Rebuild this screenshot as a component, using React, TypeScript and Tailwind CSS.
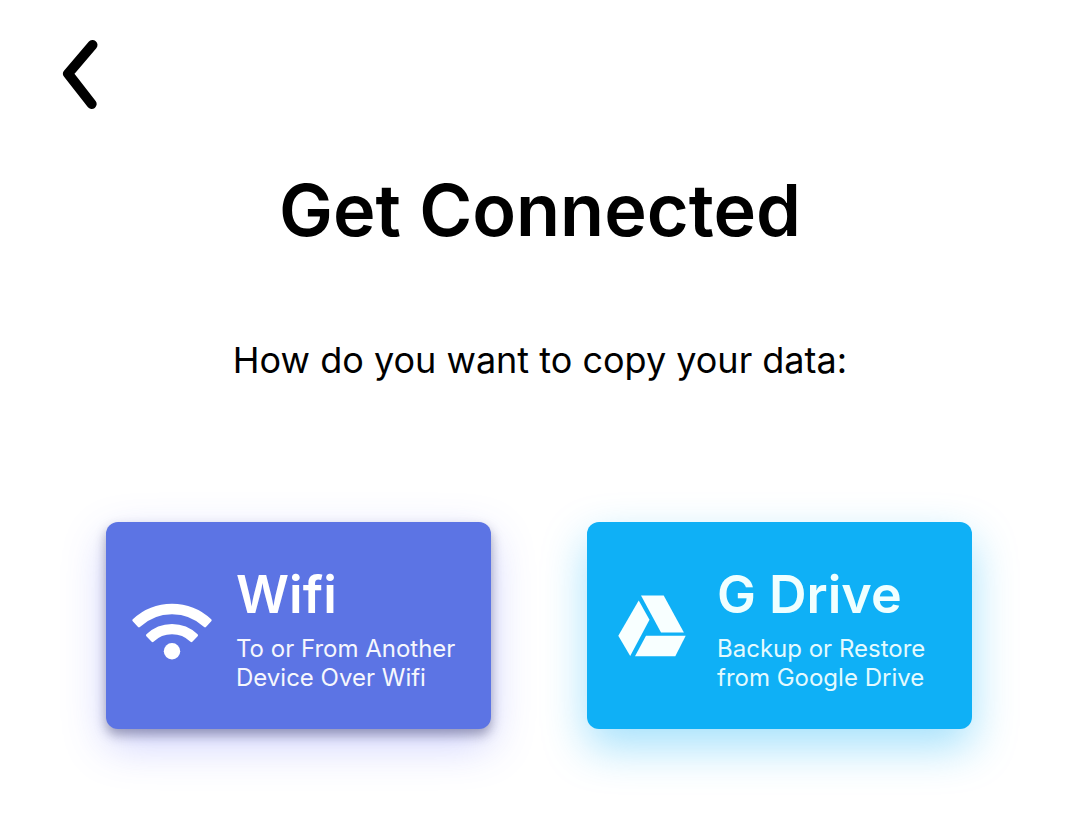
import type { ReactNode } from "react";

function WifiIcon() {
  return (
    <svg viewBox="0 0 80 80" className="size-20 shrink-0" fill="#ffffff" aria-hidden="true">
      <g stroke="#ffffff" strokeWidth="2.6" strokeLinejoin="round">
        <path d="M1.7 34.3A55.9 55.9 0 0 1 78.3 34.3L73 40A48.1 48.1 0 0 0 7 40Z" />
        <path d="M15.3 49.3A35.7 35.7 0 0 1 64.7 49.3L59.4 54.8A28 28 0 0 0 20.6 54.8Z" />
      </g>
      <circle cx="40" cy="65.2" r="8.2" />
    </svg>
  );
}

function DriveIcon() {
  return (
    <svg viewBox="0 0 80 80" className="size-20 shrink-0" fill="#f8ffff" aria-hidden="true">
      <path d="M28 9.5H50.7L70.9 46.5H48Z" />
      <path d="M25.7 14.5L36.5 33.8L17.2 70L5.3 49.8Z" />
      <path d="M33 49.8H72.7L62.3 70.3H22Z" />
    </svg>
  );
}

type CardProps = {
  icon: ReactNode;
  title: string;
  lines: [string, string];
  tone: string;
};

function OptionCard({ icon, title, lines, tone }: CardProps) {
  return (
    <button
      type="button"
      className={`flex flex-1 cursor-pointer items-center gap-6 rounded-xl px-[26px] py-[37px] text-left ${tone}`}
    >
      {icon}
      <span className="flex flex-col gap-[3px]">
        <span className="text-[52px] leading-[72px] font-semibold">{title}</span>
        <span className="text-[24px] leading-[29px] whitespace-nowrap opacity-95">
          {lines[0]}
          <br />
          {lines[1]}
        </span>
      </span>
    </button>
  );
}

export default function App() {
  return (
    <main className="min-h-screen bg-white pb-20 font-['Inter',sans-serif] text-black">
      <header className="px-14 pt-[34px]">
        <button type="button" aria-label="Back" className="block cursor-pointer">
          <svg viewBox="0 0 48 80" className="h-20 w-12" fill="none" aria-hidden="true">
            <path
              d="M36.5 11L12 39.7L35.7 70"
              stroke="#000000"
              strokeWidth="10"
              strokeLinecap="round"
              strokeLinejoin="round"
            />
          </svg>
        </button>
      </header>
      <h1 className="mt-14 text-center text-[72px] leading-[80px] font-semibold">Get Connected</h1>
      <p className="mt-[86px] text-center text-[36px] leading-[48px]">
        How do you want to copy your data:
      </p>
      <div className="mt-[138px] flex gap-24 pr-[108px] pl-[106px]">
        <OptionCard
          icon={<WifiIcon />}
          title="Wifi"
          lines={["To or From Another", "Device Over Wifi"]}
          tone="bg-[#5c74e4] text-white shadow-[0_6px_12px_rgba(40,40,80,0.4),0_16px_44px_rgba(80,90,250,0.28)]"
        />
        <OptionCard
          icon={<DriveIcon />}
          title="G Drive"
          lines={["Backup or Restore", "from Google Drive"]}
          tone="bg-[#0fb0f6] text-[#f0ffff] shadow-[0_18px_44px_rgba(15,176,246,0.38)]"
        />
      </div>
    </main>
  );
}
